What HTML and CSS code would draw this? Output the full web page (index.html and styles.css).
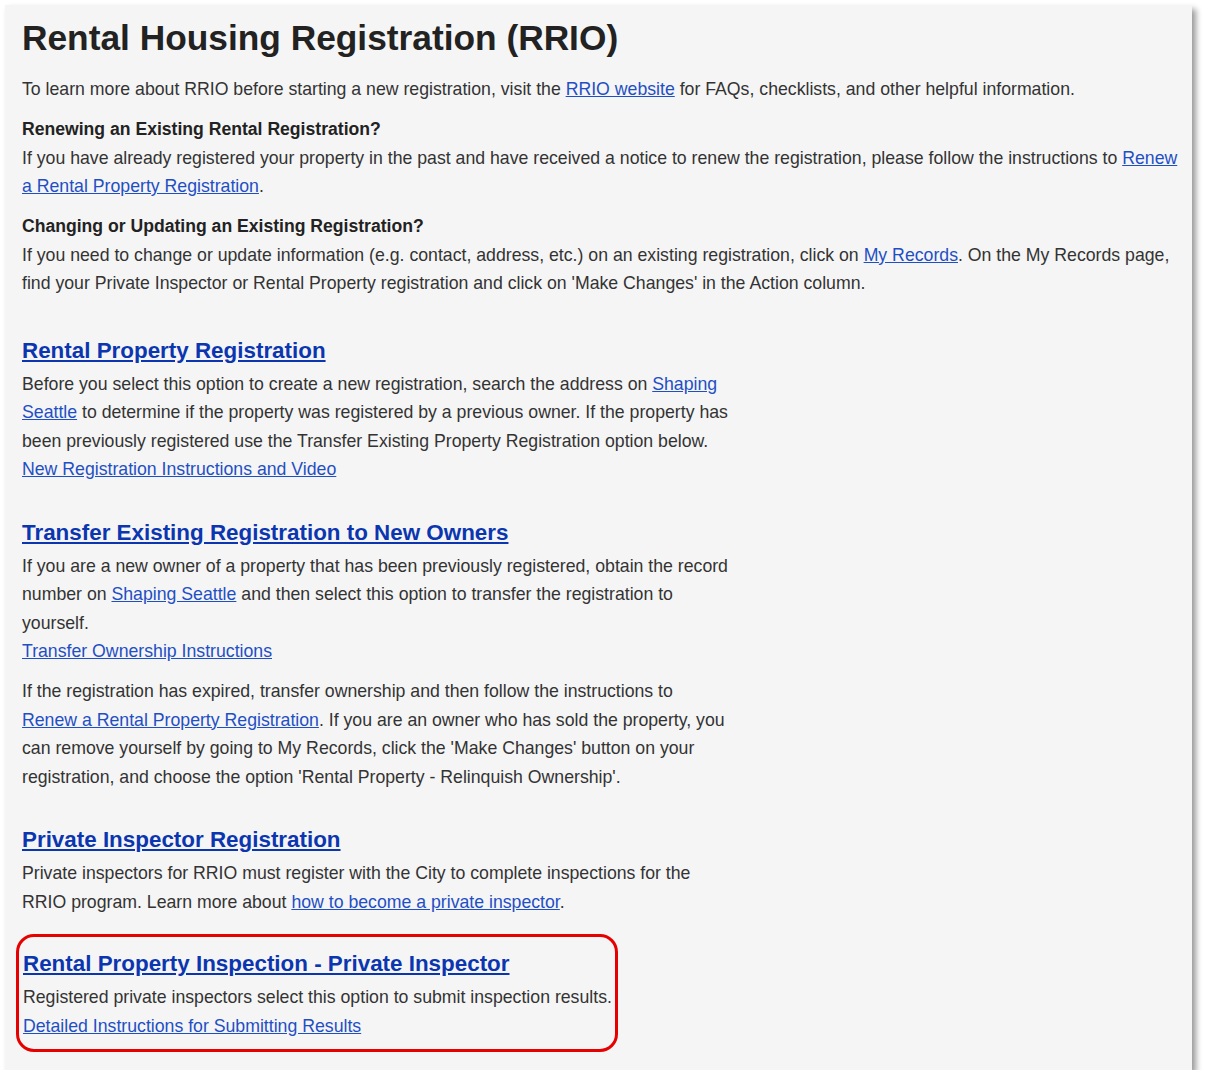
FILE: index.html
```html
<!DOCTYPE html>
<html lang="en">
<head>
    <meta charset="UTF-8">
    <meta name="viewport" content="width=device-width, initial-scale=1.0">
    <title>Rental Housing Registration (RRIO)</title>
    <link rel="stylesheet" href="styles.css">
</head>
<body>

    <div class="page">
        <h1 class="page-title">Rental Housing Registration (RRIO)</h1>

        <p>To learn more about RRIO before starting a new registration, visit the <a href="#">RRIO website</a> for FAQs, checklists, and other helpful information.</p>

        <h3 class="sub-title">Renewing an Existing Rental Registration?</h3>
        <p>If you have already registered your property in the past and have received a notice to renew the registration, please follow the instructions to <a href="#">Renew a Rental Property Registration</a>.</p>

        <h3 class="sub-title">Changing or Updating an Existing Registration?</h3>
        <p>If you need to change or update information (e.g. contact, address, etc.) on an existing registration, click on <a href="#">My Records</a>. On the My Records page, find your Private Inspector or Rental Property registration and click on 'Make Changes' in the Action column.</p>

        <div class="option first">
            <h2><a href="#">Rental Property Registration</a></h2>
            <p>Before you select this option to create a new registration, search the address on <a href="#">Shaping Seattle</a> to determine if the property was registered by a previous owner. If the property has been previously registered use the Transfer Existing Property Registration option below.<br>
            <a href="#">New Registration Instructions and Video</a></p>
        </div>

        <div class="option">
            <h2><a href="#">Transfer Existing Registration to New Owners</a></h2>
            <p>If you are a new owner of a property that has been previously registered, obtain the record number on <a href="#">Shaping Seattle</a> and then select this option to transfer the registration to yourself.<br>
            <a href="#">Transfer Ownership Instructions</a></p>
            <p>If the registration has expired, transfer ownership and then follow the instructions to <a href="#">Renew a Rental Property Registration</a>. If you are an owner who has sold the property, you can remove yourself by going to My Records, click the 'Make Changes' button on your registration, and choose the option 'Rental Property - Relinquish Ownership'.</p>
        </div>

        <div class="option">
            <h2><a href="#">Private Inspector Registration</a></h2>
            <p>Private inspectors for RRIO must register with the City to complete inspections for the RRIO program. Learn more about <a href="#">how to become a private inspector</a>.</p>
        </div>

        <!-- highlighted option -->
        <div class="option highlight">
            <h2><a href="#">Rental Property Inspection - Private Inspector</a></h2>
            <p>Registered private inspectors select this option to submit inspection results.<br>
            <a href="#">Detailed Instructions for Submitting Results</a></p>
        </div>
    </div>

</body>
</html>
```

FILE: styles.css
```css
* {
    box-sizing: border-box;
}

body {
    margin: 0;
    padding: 0;
    background-color: #fff;
    font-family: "Liberation Sans", Arial, sans-serif;
    color: #333;
}

/* PAGE PANEL */
.page {
    width: 1187px;
    margin: 5px 0 0 5px;
    padding: 13px 10px 18px 17px;
    background-color: #f5f5f5;
    box-shadow: 4px 4px 6px rgba(0, 0, 0, 0.4);
}

.page-title {
    font-size: 35.3px;
    line-height: 40px;
    font-weight: bold;
    color: #222;
    margin: 0 0 17px;
}

p {
    font-size: 17.7px;
    line-height: 28.5px;
    margin: 0 0 11.5px;
}

a {
    color: #1f4fc4;
}

.sub-title {
    font-size: 17.6px;
    line-height: 28.5px;
    font-weight: bold;
    color: #222;
    margin: 0;
}

/* OPTIONS */
.option {
    max-width: 709px;
    margin-top: 32px;
}

.option.first {
    margin-top: 36px;
}

.option h2 {
    font-size: 22.4px;
    line-height: 34px;
    margin: 0 0 2px;
}

.option h2 a {
    color: #0b36b0;
}

.option p:last-child {
    margin-bottom: 0;
}

.highlight {
    width: fit-content;
    margin: 18px 0 0 -6px;
    padding: 10px 3px 9px 4px;
    border: 3px solid #e60000;
    border-radius: 18px;
}
```
